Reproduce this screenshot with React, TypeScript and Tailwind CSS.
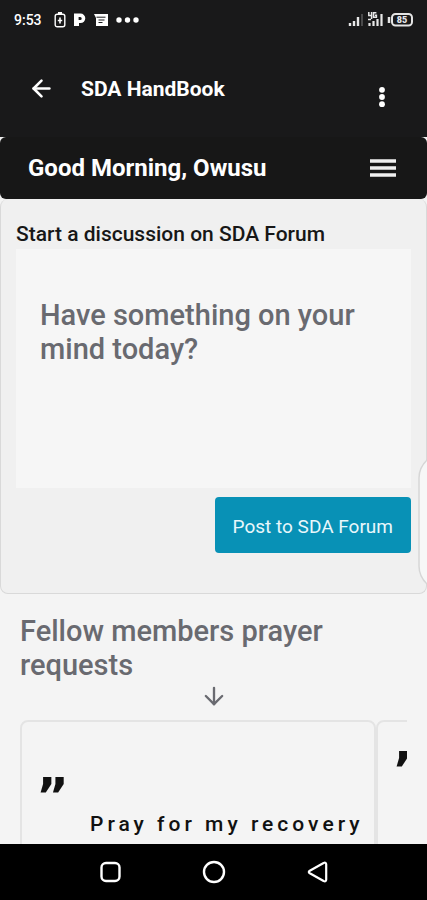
import { ArrowDown, ArrowLeft } from 'lucide-react';

function StatusBar() {
  return (
    <div className="flex h-10 items-center justify-between pl-3.5 pr-3 text-white">
      <div className="flex items-center gap-3">
        <span className="text-sm font-medium">9:53</span>
        <div className="flex items-center gap-2">
          <svg className="h-4 w-3" viewBox="0 0 12 16" fill="none" stroke="currentColor" aria-hidden="true">
            <rect x="1.2" y="2.2" width="9.6" height="12.6" rx="2" strokeWidth="1.4" />
            <path d="M4 1h4" strokeWidth="2" />
            <path d="M6 5.5v6M3.8 8.5h4.4" strokeWidth="1.6" />
          </svg>
          <svg className="h-4 w-3" viewBox="0 0 12 16" aria-hidden="true">
            <path
              d="M0 1.5h6.5a4.8 4.8 0 0 1 0 9.6H5V14H0zM4.6 5v3h1.6a1.5 1.5 0 0 0 0-3z"
              fill="currentColor"
              fillRule="evenodd"
            />
          </svg>
          <svg className="h-4 w-3.5" viewBox="0 0 14 16" aria-hidden="true">
            <path d="M0 2h14v12H2V6z" fill="currentColor" />
            <path d="M2.5 5.2h9M4.5 8h6M4.5 10.5h4" stroke="#19191a" strokeWidth="1" />
          </svg>
          <svg className="h-4 w-6" viewBox="0 0 24 16" fill="currentColor" aria-hidden="true">
            <circle cx="3" cy="8" r="2.7" />
            <circle cx="11.5" cy="8" r="2.7" />
            <circle cx="20" cy="8" r="2.7" />
          </svg>
        </div>
      </div>

      <div className="flex items-center gap-1">
        <svg className="h-4 w-4" viewBox="0 0 16 16" aria-hidden="true">
          <path d="M3 14v-3M7 14V9M11 14V5" stroke="#e8e8e8" strokeWidth="2.4" />
          <path d="M15 14V2" stroke="#4a4a4b" strokeWidth="2" />
        </svg>
        <svg className="h-4 w-4" viewBox="0 0 16 16" aria-hidden="true">
          <path d="M2.5 14v-3M6.5 14V9M10.5 14V7M14.5 14V2" stroke="#e8e8e8" strokeWidth="2.2" />
          <path d="M1.8 0v3.5h3M4.6 0v7M9.4 .8H6.6v4.4h2.8V3.2H8M1 7.5h3" fill="none" stroke="#e8e8e8" strokeWidth="1.5" />
        </svg>
        <div className="relative flex">
          <svg className="h-4 w-7" viewBox="0 0 28 16" fill="none" stroke="#e4e4e4" aria-hidden="true">
            <rect x="5" y="2" width="20" height="11.5" rx="3.5" strokeWidth="2" />
            <path d="M2 5v6" strokeWidth="2.5" />
          </svg>
          <span className="absolute inset-0 flex items-center justify-center pl-0.5 text-[9px] font-black leading-4 text-gray-200">
            85
          </span>
        </div>
      </div>
    </div>
  );
}

function AppBar() {
  return (
    <div className="flex h-[97px] items-center pl-7 pr-[31px] text-white">
      <button type="button" aria-label="Back">
        <ArrowLeft className="h-[27px] w-[27px]" strokeWidth={2.3} aria-hidden="true" />
      </button>
      <h1 className="flex-1 pl-[26px] text-[21px] font-bold leading-7">SDA HandBook</h1>
      <button type="button" aria-label="More options" className="mt-4">
        <svg className="h-6 w-7" viewBox="0 0 28 24" fill="currentColor" aria-hidden="true">
          <circle cx="14" cy="4.8" r="2.9" />
          <circle cx="14" cy="12" r="2.9" />
          <circle cx="14" cy="19.2" r="2.9" />
        </svg>
      </button>
    </div>
  );
}

function GreetingBar() {
  return (
    <div className="bg-[#f0f0f0]">
      <div className="flex h-[62px] items-center justify-between rounded-md bg-[#171717] pl-7 pr-[30px] text-white">
        <h2 className="text-2xl font-bold leading-8">Good Morning, Owusu</h2>
        <button type="button" aria-label="Menu">
          <svg className="h-5 w-7" viewBox="0 0 28 20" stroke="#f0f0f0" strokeWidth="3.4" aria-hidden="true">
            <path d="M1 3h26M1 10h26M1 17h26" />
          </svg>
        </button>
      </div>
    </div>
  );
}

function DiscussionCard() {
  return (
    <form
      className="rounded-lg border border-t-0 border-[#d9d9d9] bg-[#f0f0f0] px-[15px] pb-10 pt-5"
      onSubmit={(e) => e.preventDefault()}
    >
      <label htmlFor="post" className="block text-[21px] font-medium leading-[30px] text-[#171717]">
        Start a discussion on SDA Forum
      </label>
      <textarea
        id="post"
        placeholder="Have something on your mind today?"
        className="block h-[239px] w-full resize-none bg-[#f6f6f6] px-6 py-[49px] text-[29px] font-medium leading-[34px] outline-none placeholder:text-[#696a70]"
      />
      <div className="mt-[9px] flex justify-end">
        <button type="submit" className="h-14 rounded bg-[#0891b6] px-[18px] pt-1 text-[19px] text-[#e8f7fb]">
          Post to SDA Forum
        </button>
      </div>
    </form>
  );
}

function QuoteMark() {
  return (
    <div className="h-10 font-['DejaVu_Sans',sans-serif] text-[50px] font-bold leading-10" aria-hidden="true">
      ”
    </div>
  );
}

function PrayerRequests() {
  return (
    <section className="flex min-h-0 flex-1 flex-col px-5 pt-5">
      <h2 className="text-[29px] font-medium leading-[34px] text-[#696a70]">Fellow members prayer requests</h2>
      <ArrowDown className="mx-auto h-7 w-7 shrink-0 text-[#696a70]" aria-hidden="true" />
      <div className="mt-2.5 flex min-h-0 flex-1 overflow-hidden text-[#111]">
        <article className="h-56 w-[356px] shrink-0 rounded-lg border-2 border-[#e4e4e4] px-3.5 pt-[54px]">
          <QuoteMark />
          <p className="whitespace-nowrap pl-[54px] text-[21px] font-medium leading-4 tracking-[4px]">
            Pray for my recovery
          </p>
        </article>
        <article className="h-56 w-[356px] shrink-0 rounded-lg border-2 border-[#e4e4e4] px-3.5 pt-7">
          <QuoteMark />
        </article>
      </div>
    </section>
  );
}

function NavBar() {
  return (
    <nav className="flex h-14 shrink-0 items-center justify-center gap-20 bg-black text-white">
      <button type="button" aria-label="Recent apps">
        <svg className="h-6 w-6" viewBox="0 0 24 24" fill="none" stroke="currentColor" strokeWidth="2.4" aria-hidden="true">
          <rect x="3.5" y="3" width="18" height="18" rx="4.5" />
        </svg>
      </button>
      <button type="button" aria-label="Home">
        <svg className="h-6 w-6" viewBox="0 0 24 24" fill="none" stroke="currentColor" strokeWidth="2.4" aria-hidden="true">
          <circle cx="12" cy="12" r="10" />
        </svg>
      </button>
      <button type="button" aria-label="Back to previous screen">
        <svg
          className="h-6 w-6"
          viewBox="0 0 24 24"
          fill="none"
          stroke="currentColor"
          strokeWidth="2.2"
          strokeLinejoin="round"
          aria-hidden="true"
        >
          <path d="M3.8 10.8 17.6 3q2.6-1 2.6 1.6v14.8q0 2.6-2.6 1.6L3.8 13.2q-2-1.2 0-2.4z" />
        </svg>
      </button>
    </nav>
  );
}

export default function App() {
  return (
    <div className="relative flex h-screen flex-col overflow-hidden bg-[#f4f4f4] font-['Roboto',sans-serif]">
      <header className="shrink-0 bg-[#19191a]">
        <StatusBar />
        <AppBar />
      </header>
      <main className="flex min-h-0 flex-1 flex-col overflow-hidden">
        <GreetingBar />
        <DiscussionCard />
        <PrayerRequests />
      </main>
      <NavBar />

      {/* edge panel handle */}
      <svg className="absolute right-0 top-[456px] h-[132px] w-2.5" viewBox="0 0 10 132" aria-hidden="true">
        <path d="M11 3Q2 11 2 22v88q0 11 9 19" fill="#f7f7f7" stroke="#d6d6d6" strokeWidth="1.5" />
      </svg>
    </div>
  );
}
